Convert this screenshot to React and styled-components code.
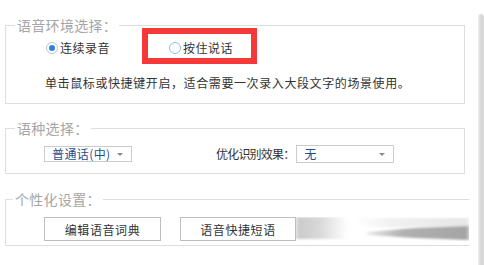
import React from "react";
import styled, { createGlobalStyle } from "styled-components";

const GlobalStyle = createGlobalStyle`
  html, body {
    margin: 0;
    padding: 0;
    background: #fff;
  }
  body {
    font-family: "Noto Sans CJK SC", "Noto Sans", sans-serif;
    font-size: 12px;
    color: #333;
  }
`;

const Page = styled.div`
  display: flex;
  width: 484px;
  height: 265px;
  overflow: hidden;
`;

const Main = styled.div`
  width: 478px;
  padding-left: 5px;
  box-sizing: border-box;
`;

const ScrollTrack = styled.div`
  width: 6px;
  margin-top: 14px;
  border-radius: 4px 4px 0 0;
  background: linear-gradient(to right, #ececec, #d6d6d6 60%, #dcdcdc);
`;

const Group = styled.div`
  position: relative;
  box-sizing: border-box;
  width: ${({ $width }) => $width}px;
  margin-top: ${({ $top }) => $top}px;
  border: 1px solid #dedede;
  border-right-color: ${({ $open }) => ($open ? "transparent" : "#dedede")};
  padding: ${({ $pad }) => $pad};
`;

const Legend = styled.span`
  position: absolute;
  top: -9px;
  left: ${({ $left }) => $left}px;
  padding: 0 2px;
  background: #fff;
  color: #a6a6a6;
  font-size: 14px;
  line-height: 16px;
  letter-spacing: 0.3px;
`;

const OptionRow = styled.div`
  display: flex;
  align-items: center;
  gap: 8px;
  padding-left: 13px;
`;

const Option = styled.label`
  display: inline-flex;
  align-items: center;
  gap: 2px;
  border: 6px solid ${({ $marked }) => ($marked ? "#f53838" : "transparent")};
  padding: 4px 18px 0 21px;
  height: 20px;
  box-sizing: content-box;
  line-height: 16px;
  letter-spacing: 0.5px;
  color: #333;
`;

const Radio = styled.span`
  position: relative;
  width: 12px;
  height: 12px;
  box-sizing: border-box;
  border-radius: 50%;
  border: 1px solid ${({ $checked }) => ($checked ? "#b9c7d6" : "#8fc1ea")};
  background: #fff;

  &::after {
    content: "";
    display: ${({ $checked }) => ($checked ? "block" : "none")};
    position: absolute;
    left: 2px;
    top: 2px;
    width: 6px;
    height: 6px;
    border-radius: 50%;
    background: #2b82dc;
  }
`;

const Description = styled.p`
  margin: 11px 0 0 39px;
  line-height: 16px;
  letter-spacing: 0.6px;
  color: #333;
`;

const FieldRow = styled.div`
  display: flex;
  align-items: center;
  padding-left: 38px;
`;

const Select = styled.div`
  display: flex;
  align-items: center;
  justify-content: space-between;
  box-sizing: border-box;
  width: ${({ $width }) => $width}px;
  height: ${({ $height }) => $height}px;
  border: 1px solid #cccccc;
  background: #fff;
  padding: 0 8px 0 7px;
  color: #1f4f8e;
  line-height: 14px;
  letter-spacing: 0.4px;
`;

const Caret = styled.span`
  width: 0;
  height: 0;
  border-left: 3px solid transparent;
  border-right: 3px solid transparent;
  border-top: 3px solid #8a8a8a;
`;

const FieldLabel = styled.span`
  margin-left: 84px;
  margin-right: 2px;
  line-height: 16px;
  letter-spacing: -0.8px;
  color: #333;
`;

const ButtonRow = styled.div`
  display: flex;
  align-items: center;
  padding-left: 38px;
  gap: 19px;
`;

const Button = styled.button`
  box-sizing: border-box;
  width: ${({ $width }) => $width}px;
  height: 24px;
  border: 1px solid #bdbdbd;
  background: #fff;
  font-family: inherit;
  font-size: 12px;
  letter-spacing: 0.6px;
  color: #333;
  padding: 0;
`;

const Smear = styled.svg`
  flex: 1;
  height: 24px;
  margin-left: -19px;
  display: block;
`;

function DragSmear() {
  return (
    <Smear viewBox="0 0 174 24" preserveAspectRatio="none">
      <defs>
        <linearGradient id="fadeLeft" x1="0" x2="1" y1="0" y2="0">
          <stop offset="0" stopColor="#c9c9c9" />
          <stop offset="0.45" stopColor="#d8d8d8" />
          <stop offset="1" stopColor="#ffffff" />
        </linearGradient>
        <linearGradient id="wedge" x1="0" x2="1" y1="0" y2="0">
          <stop offset="0" stopColor="#e8e8e8" />
          <stop offset="0.35" stopColor="#b0b0b0" />
          <stop offset="1" stopColor="#a4a4a4" />
        </linearGradient>
        <linearGradient id="haze" x1="0" x2="1" y1="0" y2="0">
          <stop offset="0" stopColor="#ffffff" />
          <stop offset="0.3" stopColor="#f1f1f1" />
          <stop offset="1" stopColor="#e6e6e6" />
        </linearGradient>
        <filter id="soft" x="-10%" y="-40%" width="120%" height="180%">
          <feGaussianBlur stdDeviation="2 0.9" />
        </filter>
      </defs>
      <rect x="0" y="0" width="52" height="22" fill="url(#fadeLeft)" filter="url(#soft)" />
      <rect x="60" y="1" width="114" height="9" fill="url(#haze)" filter="url(#soft)" />
      <polygon points="72,15 120,11 174,9 174,23 120,21 72,18" fill="url(#wedge)" filter="url(#soft)" />
    </Smear>
  );
}

export default function App() {
  return (
    <>
      <GlobalStyle />
      <Page>
        <Main>
          <Group $width={460} $top={25} $pad="2px 0 12px">
            <Legend $left={9}>语音环境选择：</Legend>
            <OptionRow>
              <Option>
                <Radio $checked />
                连续录音
              </Option>
              <Option $marked>
                <Radio />
                按住说话
              </Option>
            </OptionRow>
            <Description>单击鼠标或快捷键开启，适合需要一次录入大段文字的场景使用。</Description>
          </Group>

          <Group $width={460} $top={24} $pad="16px 0 10px">
            <Legend $left={9}>语种选择：</Legend>
            <FieldRow>
              <Select $width={88} $height={16}>
                普通话(中)
                <Caret />
              </Select>
              <FieldLabel>优化识别效果：</FieldLabel>
              <Select $width={98} $height={18}>
                无
                <Caret />
              </Select>
            </FieldRow>
          </Group>

          <Group $width={465} $top={25} $pad="17px 0 4px" $open>
            <Legend $left={7}>个性化设置：</Legend>
            <ButtonRow>
              <Button $width={117}>编辑语音词典</Button>
              <Button $width={116}>语音快捷短语</Button>
              <DragSmear />
            </ButtonRow>
          </Group>
        </Main>
        <ScrollTrack />
      </Page>
    </>
  );
}
